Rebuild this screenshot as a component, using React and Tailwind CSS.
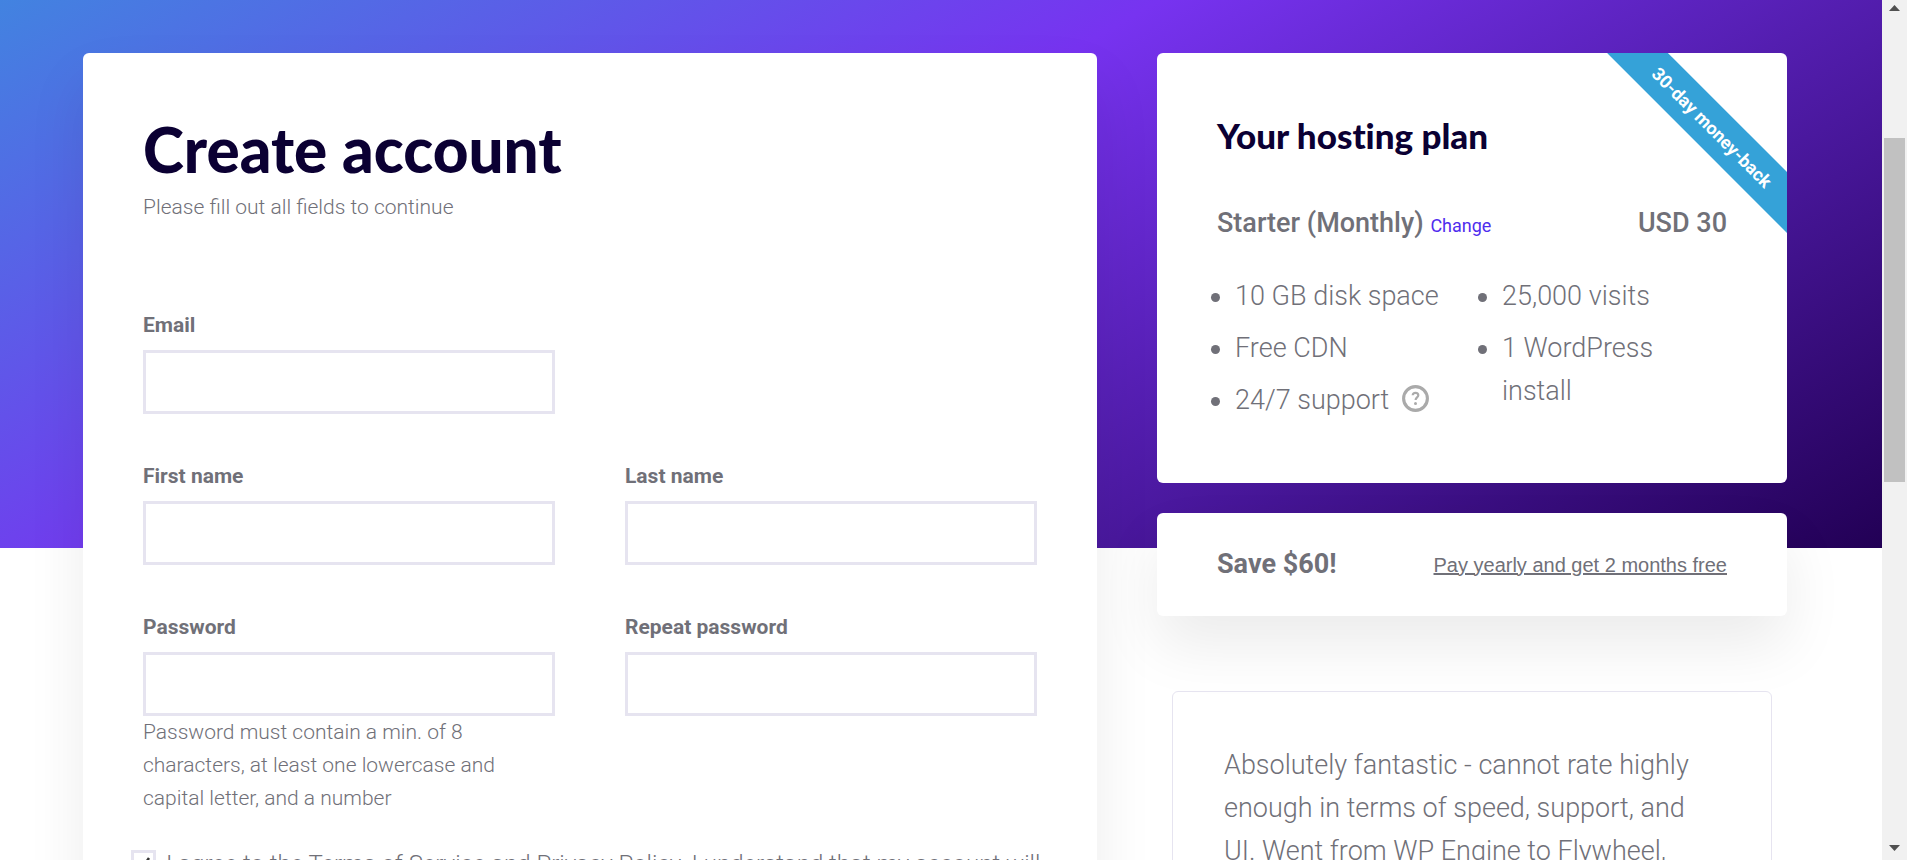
import React, { useState } from 'react';

const Field = ({ id, label, type = 'text', hint }) => (
  <div className="w-[412px]">
    <label htmlFor={id} className="block text-[21px] leading-[34px] font-bold">{label}</label>
    <input id={id} type={type} className="mt-2 block h-16 w-full border-3 border-[#e6e4f0] bg-white px-4 text-[21px] outline-none" />
    {hint && <p className="pr-10 text-[21px] leading-[33px] font-light">{hint}</p>}
  </div>
);

const HelpIcon = () => (
  <svg viewBox="0 0 27 27" className="h-[27px] w-[27px]" fill="none" stroke="#aaaaaa">
    <circle cx="13.5" cy="13.5" r="11.9" strokeWidth="3.1" />
    <path d="M10.7 10.300c.1-1.600 1.200-2.500 2.800-2.500s2.800.9 2.800 2.400c0 2.200-2.700 2.300-2.700 4.800" strokeWidth="2.200" />
    <circle cx="13.500" cy="18.500" r="1.500" fill="#aaaaaa" stroke="none" />
  </svg>
);

const Scrollbar = () => (
  <div className="fixed inset-y-0 right-0 z-20 w-[25px] bg-[#f1f1f1]">
    <svg viewBox="0 0 25 25" className="absolute top-0 left-0 w-full">
      <path d="M7 11h11l-5.500-6z" fill="#505050" />
    </svg>
    <div className="absolute top-[16%] bottom-[44%] left-0.5 w-[21px] bg-[#c1c1c1]" />
    <svg viewBox="0 0 25 25" className="absolute bottom-0 left-0 w-full">
      <path d="M7 10h11l-5.500 6z" fill="#505050" />
    </svg>
  </div>
);

const features = [
  ['10 GB disk space', 'Free CDN', '24/7 support'],
  ['25,000 visits', '1 WordPress install'],
];

const App = () => {
  const [agreed, setAgreed] = useState(true);

  return (
    <div className="relative h-screen overflow-hidden bg-white pr-[25px] font-['Roboto',sans-serif] text-[#707078]">
      <div className="absolute inset-x-0 top-0 mr-[25px] h-[548px] bg-[linear-gradient(150deg,#4283e0_0%,#7733f0_41%,#220055_100%)]" />

      <main className="relative flex items-start gap-[60px] pt-[53px] pr-[95px] pl-[83px]">
        {/* Account form */}
        <form className="flex-1 rounded-md bg-white px-[60px] pt-[58px] pb-40 shadow-[0_30px_60px_rgba(0,0,0,0.08)]">
          <h1 className="font-['Lato',sans-serif] text-[62px] leading-[76px] font-black text-[#0b0033]">Create account</h1>
          <p className="mt-0.5 text-[21px] leading-[36px] font-light">Please fill out all fields to continue</p>

          <div className="mt-[83px] flex flex-col gap-[45px]">
            <Field id="email" label="Email" type="email" />
            <div className="flex justify-between">
              <Field id="first-name" label="First name" />
              <Field id="last-name" label="Last name" />
            </div>
            <div className="flex justify-between">
              <Field
                id="password"
                label="Password"
                type="password"
                hint="Password must contain a min. of 8 characters, at least one lowercase and capital letter, and a number"
              />
              <Field id="repeat-password" label="Repeat password" type="password" />
            </div>
          </div>

          <div className="-mx-3 mt-[30px] flex items-start gap-[10px]">
            <span className="relative mt-[5px] h-[25px] w-[25px] shrink-0">
              <input
                id="terms"
                type="checkbox"
                checked={agreed}
                onChange={e => setAgreed(e.target.checked)}
                className="h-full w-full appearance-none border-3 border-[#e6e4f0] bg-white"
              />
              {agreed && (
                <svg viewBox="0 0 25 25" className="pointer-events-none absolute inset-0" fill="none" stroke="#333" strokeWidth="2.500">
                  <path d="M7 13l4 5 7-10" />
                </svg>
              )}
            </span>
            <label htmlFor="terms" className="text-[24px] leading-[38px] font-light">
              I agree to the Terms of Service and Privacy Policy. I understand that my account will
            </label>
          </div>
        </form>

        <aside className="w-[630px] shrink-0">
          {/* Plan */}
          <section className="relative h-[430px] overflow-hidden rounded-md bg-white px-[60px] pt-[60px]">
            <div className="absolute top-[53px] -right-[55px] w-[260px] rotate-45 bg-[#35a2d8] text-center text-[18px] leading-[43px] font-bold text-white">
              30-day money-back
            </div>
            <h2 className="font-['Lato',sans-serif] text-[35px] leading-[44px] font-black text-[#0b0033] [font-variant-ligatures:none]">Your hosting plan</h2>
            <div className="mt-[45px] flex items-baseline justify-between text-[27px] leading-[43px] font-medium">
              <span>
                Starter (Monthly) <a href="#plans" className="text-[18px] font-normal text-[#4f2cee]">Change</a>
              </span>
              <span>USD 30</span>
            </div>
            <div className="mt-7 flex text-[27px] leading-[43px] font-light">
              {features.map((col, i) => (
                <ul key={i} className="w-[267px] shrink-0">
                  {col.map(f => (
                    <li key={f} className="mb-[9px] flex gap-[15px] pr-[50px] last:mb-0">
                      <span className="-ml-[6px] mt-[18px] h-[9px] w-[9px] shrink-0 rounded-full bg-[#707078]" />
                      <span className={i === 0 ? 'whitespace-nowrap' : undefined}>{f}</span>
                      {f === '24/7 support' && (
                        <button type="button" aria-label="Support details" className="-ml-0.5 mt-[6px] self-start"><HelpIcon /></button>
                      )}
                    </li>
                  ))}
                </ul>
              ))}
            </div>
          </section>

          <section className="mt-[30px] flex h-[103px] items-center justify-between rounded-md bg-white px-[60px] shadow-[0_30px_60px_rgba(0,0,0,0.08)]">
            <strong className="text-[27px] leading-[43px]">Save $60!</strong>
            <button type="button" className="font-['Liberation_Sans',sans-serif] text-[20px] underline">Pay yearly and get 2 months free</button>
          </section>

          {/* Testimonial */}
          <blockquote className="mx-[15px] mt-[75px] rounded-md border border-[#e6e4f0] px-[51px] py-[52px] text-[27px] leading-[43px] font-light">
            Absolutely fantastic - cannot rate highly enough in terms of speed, support, and UI. Went from WP Engine to Flywheel,
          </blockquote>
        </aside>
      </main>
      <Scrollbar />
    </div>
  );
};

export default App;
